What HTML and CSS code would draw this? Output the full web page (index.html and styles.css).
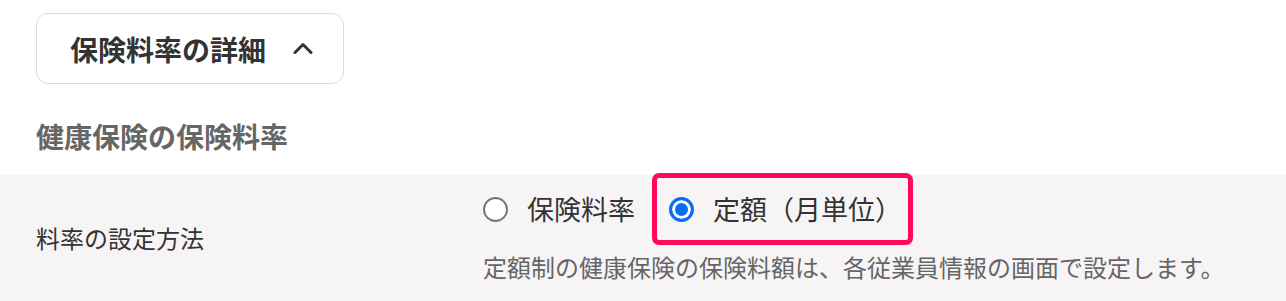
FILE: index.html
```html
<!DOCTYPE html>
<html lang="ja">
<head>
    <meta charset="UTF-8">
    <meta name="viewport" content="width=device-width, initial-scale=1.0">
    <title>保険料率の詳細</title>
    <link rel="stylesheet" href="styles.css">
</head>
<body>
    <main>
        <div class="top">
            <button class="toggle" type="button">
                <span class="toggle-text">保険料率の詳細</span>
                <svg class="chevron" width="20" height="12" viewBox="0 0 20 12">
                    <polyline points="2,10.5 10,2.5 18,10.5" fill="none" stroke="#333" stroke-width="3" stroke-linecap="round" stroke-linejoin="round"/>
                </svg>
            </button>

            <h3 class="section-title">健康保険の保険料率</h3>
        </div>

        <div class="row">
            <div class="row-label">料率の設定方法</div>
            <div class="row-body">
                <div class="options">
                    <label class="option">
                        <span class="radio"></span>
                        <span>保険料率</span>
                    </label>
                    <label class="option highlight">
                        <span class="radio checked"></span>
                        <span>定額（月単位）</span>
                    </label>
                </div>
                <p class="note">定額制の健康保険の保険料額は、各従業員情報の画面で設定します。</p>
            </div>
        </div>
    </main>
</body>
</html>
```

FILE: styles.css
```css
body {
    font-family: "Noto Sans CJK JP", "Noto Sans", sans-serif;
    margin: 0;
    padding: 0;
    color: #333;
    background: #fff;
}

.top {
    padding: 13px 36px 0;
}

.toggle {
    display: flex;
    align-items: center;
    gap: 27px;
    box-sizing: border-box;
    width: 308px;
    height: 71px;
    padding: 0 28px 0 33px;
    background: #fff;
    border: 1.5px solid #dcdcdc;
    border-radius: 12px;
    font-family: inherit;
    font-size: 28px;
    font-weight: bold;
    color: #333;
    line-height: 40px;
    white-space: nowrap;
}

.toggle-text {
    flex-shrink: 0;
}

.chevron {
    display: block;
    flex-shrink: 0;
    margin-top: -2px;
}

.section-title {
    margin: 32px 0 19px;
    font-size: 28px;
    line-height: 40px;
    font-weight: bold;
    color: #666;
}

.row {
    display: flex;
    align-items: flex-start;
    background: #f6f4f5;
    padding: 16px 0;
}

.row-label {
    box-sizing: border-box;
    width: 483px;
    padding-left: 36px;
    margin-top: 29px;
    font-size: 24px;
    line-height: 36px;
    color: #333;
}

.options {
    display: flex;
    align-items: center;
    gap: 17px;
    height: 36px;
}

.option {
    display: flex;
    align-items: center;
    gap: 19px;
    font-size: 27px;
    line-height: 36px;
    color: #333;
}

.highlight {
    box-sizing: border-box;
    height: 72px;
    margin: -18px 0;
    padding: 0 6px 0 12px;
    border: 5px solid #ff0a5a;
    border-radius: 7px;
}

.radio {
    box-sizing: border-box;
    width: 25px;
    height: 25px;
    border-radius: 50%;
    border: 2px solid #777;
    background: #fff;
}

.radio.checked {
    border: 3px solid #0a6cf5;
    background: #0a6cf5;
    box-shadow: inset 0 0 0 3px #fff;
}

.note {
    margin: 22px 0 0;
    font-size: 24px;
    line-height: 36px;
    color: #666;
}
```
